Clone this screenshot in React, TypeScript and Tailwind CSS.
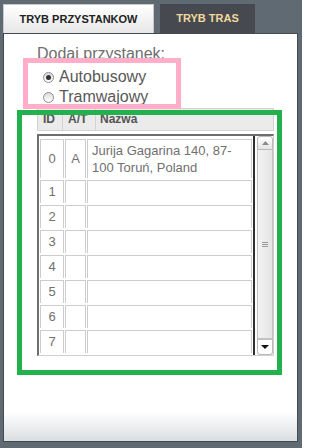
import React from 'react'

const ROWS = [
  { id: 0, type: 'A', name: true },
  { id: 1, type: '', name: false },
  { id: 2, type: '', name: false },
  { id: 3, type: '', name: false },
  { id: 4, type: '', name: false },
  { id: 5, type: '', name: false },
  { id: 6, type: '', name: false },
  { id: 7, type: '', name: false },
]

function Radio({ checked }: { checked?: boolean }) {
  return (
    <span className="flex h-[11px] w-[11px] shrink-0 items-center justify-center rounded-full border border-[#8c8c8c] bg-[linear-gradient(to_bottom,#dcdcdc,#ffffff)]">
      {checked && <span className="h-[5px] w-[5px] rounded-full bg-[#333]" />}
    </span>
  )
}

function Scrollbar() {
  return (
    <div className="flex w-[16px] flex-col">
      {/* up button */}
      <div className="flex h-[14px] items-center justify-center rounded-t-[3px] border border-[#b9b9b9] bg-[linear-gradient(to_bottom,#ffffff,#e4e4e4)]">
        <svg width="7" height="4" viewBox="0 0 7 4">
          <path d="M0 4 L3.5 0 L7 4 Z" fill="#8a8a8a" />
        </svg>
      </div>
      {/* track / thumb */}
      <div className="flex flex-1 items-center justify-center border-x border-b-2 border-[#c2c2c2] bg-[linear-gradient(to_right,#f3f3f3,#e4e4e4)]">
        <div className="flex flex-col gap-[1px]">
          <span className="h-[1px] w-[6px] bg-[#9a9a9a]" />
          <span className="h-[1px] w-[6px] bg-[#9a9a9a]" />
          <span className="h-[1px] w-[6px] bg-[#9a9a9a]" />
        </div>
      </div>
      {/* down button */}
      <div className="flex h-[15px] items-center justify-center rounded-b-[3px] border border-t-0 border-[#b9b9b9] bg-white">
        <svg width="8" height="4" viewBox="0 0 8 4">
          <path d="M0 0 L8 0 L4 4 Z" fill="#111" />
        </svg>
      </div>
    </div>
  )
}

export default function App() {
  return (
    <div className="relative h-[448px] w-[302px] overflow-hidden bg-[#5f6a73] pl-[3px] pt-[4px] font-['Liberation_Sans',Arial,sans-serif]">
      {/* Tabs */}
      <div className="flex h-[29px] gap-[6px]">
        <div className="flex w-[151px] items-center justify-center border border-b-0 border-[#c9c9c9] bg-[linear-gradient(to_bottom,#ffffff,#e7e7e7)] text-[11px] font-bold text-[#222]">
          TRYB PRZYSTANKOW
        </div>
        <div className="flex w-[95px] items-center justify-center bg-[#464a50] text-[11px] font-bold text-[#f2d89c]">
          TRYB TRAS
        </div>
      </div>

      {/* Panel */}
      <div className="h-[409px] w-[295px] border border-[#444a51] bg-[linear-gradient(to_bottom,#ffffff_378px,#dcdfe2_406px)] pt-[10px]">
        <p className="ml-[33px] text-[16px] leading-[20px] text-[#6e6e6e]">Dodaj przystanek:</p>

        <div className="ml-[39px] mt-[3px] flex flex-col">
          <label className="flex h-[20px] items-center gap-[5px] text-[16px] leading-[20px] text-[#585858]">
            <Radio checked />
            Autobusowy
          </label>
          <label className="flex h-[20px] items-center gap-[5px] text-[16px] leading-[20px] text-[#585858]">
            <Radio />
            Tramwajowy
          </label>
        </div>

        {/* Table header */}
        <div className="ml-[33px] mt-[1px] flex h-[23px] w-[237px] border border-[#d2d2d2] bg-[#ebebeb] text-[12px] font-bold leading-[21px] text-[#555]">
          <div className="w-[25px] border-r border-[#d2d2d2] pl-[5px]">ID</div>
          <div className="w-[33px] border-r border-[#d2d2d2] pl-[5px]">A/T</div>
          <div className="pl-[4px]">Nazwa</div>
        </div>

        {/* Table body */}
        <div className="ml-[33px] mt-[3px] flex h-[222px] w-[237px] border-b border-l-2 border-r border-t-2 border-b-[#cfcfcf] border-l-[#6e6e6e] border-r-[#cfcfcf] border-t-[#6e6e6e]">
          <div className="flex w-[216px] flex-col gap-[2px] overflow-hidden border-r-2 border-[#2e2e2e] pl-[1px] pt-[3px]">
            {ROWS.map((r) => (
              <div key={r.id} className={`flex shrink-0 gap-[1px] ${r.name ? 'h-[39px]' : 'h-[23px]'}`}>
                <div className="flex w-[24px] items-center justify-center border-x border-t border-[#cccccc] text-[13px] text-[#707070]">
                  {r.id}
                </div>
                <div className="flex w-[21px] items-center justify-center border-x border-t border-[#cccccc] text-[13px] text-[#707070]">
                  {r.type}
                </div>
                <div className="flex w-[165px] items-center border-x border-t border-[#cccccc] pl-[4px] text-[13px] leading-[17px] text-[#707070]">
                  {r.name && (
                    <span>
                      Jurija Gagarina 140, 87-
                      <br />
                      100 Toruń, Poland
                    </span>
                  )}
                </div>
              </div>
            ))}
          </div>
          <div className="w-[2px]" />
          <Scrollbar />
        </div>
      </div>

      {/* Annotation overlays */}
      <div className="absolute left-[23px] top-[58px] h-[51px] w-[158px] border-[5px] border-[#ffaec9]" />
      <div className="absolute left-[17px] top-[110px] h-[265px] w-[265px] border-[5px] border-[#22b14c]" />
    </div>
  )
}
